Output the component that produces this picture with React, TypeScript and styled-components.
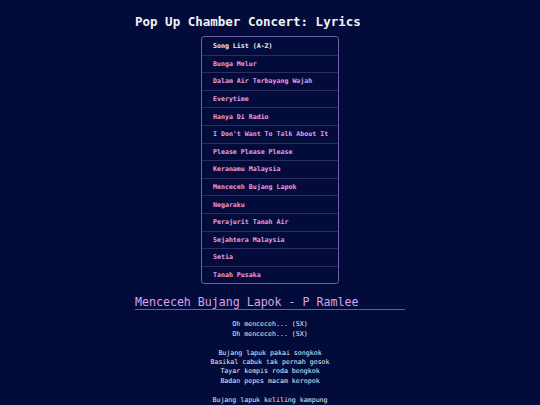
import React from "react";
import styled, { createGlobalStyle } from "styled-components";

const songs = [
  "Bunga Melur",
  "Dalam Air Terbayang Wajah",
  "Everytime",
  "Hanya Di Radio",
  "I Don't Want To Talk About It",
  "Please Please Please",
  "Keranamu Malaysia",
  "Menceceh Bujang Lapok",
  "Negaraku",
  "Perajurit Tanah Air",
  "Sejahtera Malaysia",
  "Setia",
  "Tanah Pusaka",
];

const stanzas = [
  ["Oh menceceh... (5X)", "Oh menceceh... (5X)"],
  [
    "Bujang lapuk pakai songkok",
    "Basikal cabuk tak pernah gosok",
    "Tayar kempis roda bengkok",
    "Badan pepes macam keropok",
  ],
  ["Bujang lapuk keliling kampung"],
];

const App = () => {
  return (
    <>
      <GlobalStyle />
      <Page>
        <Title>Pop Up Chamber Concert: Lyrics</Title>
        <SongList>
          <SongItem $header>Song List (A-Z)</SongItem>
          {songs.map((s) => (
            <SongItem key={s}>
              <SongLink href="#">{s}</SongLink>
            </SongItem>
          ))}
        </SongList>
        <SongHeading>Menceceh Bujang Lapok - P Ramlee</SongHeading>
        <Lyrics>
          {stanzas.map((lines, i) => (
            <Stanza key={i}>
              {lines.map((l) => (
                <span key={l}>
                  {l}
                  <br />
                </span>
              ))}
            </Stanza>
          ))}
        </Lyrics>
      </Page>
    </>
  );
};

export default App;

const GlobalStyle = createGlobalStyle`
  html, body {
    margin: 0;
    background: #020b3a;
    height: 100%;
    overflow: hidden;
  }
  body {
    font-family: "DejaVu Sans Mono", "Liberation Mono", monospace;
    color: #e8e8f0;
  }
`;

const Page = styled.div`
  width: 270px;
  margin: 0 auto;
  padding-top: 14px;
`;

const Title = styled.h1`
  margin: 0 0 7px;
  font-size: 12.5px;
  line-height: 15px;
  font-weight: 700;
  color: #f2f2f6;
`;

const SongList = styled.ul`
  list-style: none;
  margin: 0 auto;
  padding: 0;
  width: 136px;
  border: 1px solid #6e5ea6;
  border-radius: 3px;
`;

const SongItem = styled.li<{ $header?: boolean }>`
  height: 17.6px;
  display: flex;
  align-items: center;
  padding-left: 11px;
  box-sizing: border-box;
  font-size: 6.6px;
  font-weight: 700;
  color: ${(p) => (p.$header ? "#eeeef4" : "#e6a0e6")};
  & + & {
    border-top: 1px solid #2c2e62;
  }
`;

const SongLink = styled.a`
  color: #e6a0e6;
  text-decoration: none;
`;

const SongHeading = styled.h2`
  margin: 11px 0 0;
  font-size: 11.6px;
  line-height: 14px;
  font-weight: 400;
  color: #dba2ee;
  border-bottom: 1.5px solid #6a5aa0;
`;

const Lyrics = styled.div`
  margin-top: 10px;
  text-align: center;
  font-size: 6.6px;
  line-height: 9.4px;
  color: #ececf2;
`;

const Stanza = styled.p`
  margin: 0 0 9.4px;
`;
